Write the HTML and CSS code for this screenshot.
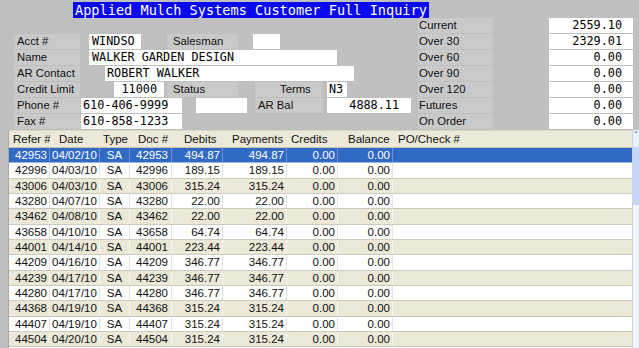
FILE: index.html
```
<!DOCTYPE html>
<html>
<head>
    <title>Customer Full Inquiry</title>
    <link rel="stylesheet" href="styles.css">
</head>
<body>
    <div class="screen">
        <div class="title-row">
            <span class="title">Applied Mulch Systems Customer Full Inquiry</span>
        </div>

        <div class="top">
            <div class="account">
                <div class="field-row">
                    <span class="label">Acct #</span>
                    <span class="value acct">WINDSO</span>
                    <span class="label salesman">Salesman</span>
                    <span class="value salesman-val"></span>
                </div>
                <div class="field-row">
                    <span class="label">Name</span>
                    <span class="value name">WALKER GARDEN DESIGN</span>
                </div>
                <div class="field-row">
                    <span class="label">AR Contact</span>
                    <span class="value contact">ROBERT WALKER</span>
                </div>
                <div class="field-row">
                    <span class="label">Credit Limit</span>
                    <span class="value credit">11000</span>
                    <span class="label status">Status</span>
                    <span class="label terms">Terms</span>
                    <span class="value terms-val">N3</span>
                </div>
                <div class="field-row">
                    <span class="label">Phone #</span>
                    <span class="value phone">610-406-9999</span>
                    <span class="value blank"></span>
                    <span class="label arbal">AR Bal</span>
                    <span class="value arbal-val">4888.11</span>
                </div>
                <div class="field-row">
                    <span class="label">Fax #</span>
                    <span class="value phone">610-858-1233</span>
                </div>
            </div>

            <div class="aging">
                <div class="field-row"><span class="label age">Current</span><span class="value amount">2559.10</span></div>
                <div class="field-row"><span class="label age">Over 30</span><span class="value amount">2329.01</span></div>
                <div class="field-row"><span class="label age">Over 60</span><span class="value amount">0.00</span></div>
                <div class="field-row"><span class="label age">Over 90</span><span class="value amount">0.00</span></div>
                <div class="field-row"><span class="label age">Over 120</span><span class="value amount">0.00</span></div>
                <div class="field-row"><span class="label age">Futures</span><span class="value amount">0.00</span></div>
                <div class="field-row"><span class="label age">On Order</span><span class="value amount">0.00</span></div>
            </div>
        </div>

        <div class="history">
            <div class="grid">
                <div class="row head">
                    <span>Refer #</span><span>Date</span><span>Type</span><span>Doc #</span><span>Debits</span><span>Payments</span><span>Credits</span><span>Balance</span><span>PO/Check #</span>
                </div>
                <div class="row selected">
                    <span>42953</span><span>04/02/10</span><span>SA</span><span>42953</span><span>494.87</span><span>494.87</span><span>0.00</span><span>0.00</span><span></span>
                </div>
                <div class="row">
                    <span>42996</span><span>04/03/10</span><span>SA</span><span>42996</span><span>189.15</span><span>189.15</span><span>0.00</span><span>0.00</span><span></span>
                </div>
                <div class="row alt">
                    <span>43006</span><span>04/03/10</span><span>SA</span><span>43006</span><span>315.24</span><span>315.24</span><span>0.00</span><span>0.00</span><span></span>
                </div>
                <div class="row">
                    <span>43280</span><span>04/07/10</span><span>SA</span><span>43280</span><span>22.00</span><span>22.00</span><span>0.00</span><span>0.00</span><span></span>
                </div>
                <div class="row alt">
                    <span>43462</span><span>04/08/10</span><span>SA</span><span>43462</span><span>22.00</span><span>22.00</span><span>0.00</span><span>0.00</span><span></span>
                </div>
                <div class="row">
                    <span>43658</span><span>04/10/10</span><span>SA</span><span>43658</span><span>64.74</span><span>64.74</span><span>0.00</span><span>0.00</span><span></span>
                </div>
                <div class="row alt">
                    <span>44001</span><span>04/14/10</span><span>SA</span><span>44001</span><span>223.44</span><span>223.44</span><span>0.00</span><span>0.00</span><span></span>
                </div>
                <div class="row">
                    <span>44209</span><span>04/16/10</span><span>SA</span><span>44209</span><span>346.77</span><span>346.77</span><span>0.00</span><span>0.00</span><span></span>
                </div>
                <div class="row alt">
                    <span>44239</span><span>04/17/10</span><span>SA</span><span>44239</span><span>346.77</span><span>346.77</span><span>0.00</span><span>0.00</span><span></span>
                </div>
                <div class="row">
                    <span>44280</span><span>04/17/10</span><span>SA</span><span>44280</span><span>346.77</span><span>346.77</span><span>0.00</span><span>0.00</span><span></span>
                </div>
                <div class="row alt">
                    <span>44368</span><span>04/19/10</span><span>SA</span><span>44368</span><span>315.24</span><span>315.24</span><span>0.00</span><span>0.00</span><span></span>
                </div>
                <div class="row">
                    <span>44407</span><span>04/19/10</span><span>SA</span><span>44407</span><span>315.24</span><span>315.24</span><span>0.00</span><span>0.00</span><span></span>
                </div>
                <div class="row alt">
                    <span>44504</span><span>04/20/10</span><span>SA</span><span>44504</span><span>315.24</span><span>315.24</span><span>0.00</span><span>0.00</span><span></span>
                </div>
            </div>
            <div class="scrollbar">
                <div class="scroll-up">&#710;</div>
                <div class="scroll-thumb"></div>
            </div>
        </div>
    </div>
</body>
</html>
```

FILE: styles.css
```
body {
    margin: 0;
    padding: 0;
    background-color: #bfbfbf;
    font-family: "Liberation Sans", Arial, sans-serif;
    font-size: 11px;
    color: #111;
}

.screen {
    width: 639px;
    height: 348px;
    overflow: hidden;
}

/* title bar */
.title-row {
    height: 18px;
    padding-left: 73px;
}

.title {
    display: inline-block;
    margin-top: 2px;
    height: 16px;
    line-height: 16px;
    padding: 0 2px;
    background-color: #0808f2;
    color: #ffffff;
    font-family: "DejaVu Sans Mono", monospace;
    font-size: 13.6px;
    white-space: nowrap;
}

/* header fields */
.top {
    display: flex;
    height: 112px;
}

.account {
    width: 418px;
    margin-top: 16px;
}

.field-row {
    display: flex;
    height: 15px;
    margin-bottom: 1px;
}

.label {
    width: 63px;
    margin-left: 14px;
    padding-left: 3px;
    line-height: 15px;
    font-size: 11.3px;
    background-color: #c9c9c9;
    white-space: nowrap;
}

.value {
    display: block;
    padding: 0 3px;
    line-height: 15px;
    background-color: #ffffff;
    font-family: "DejaVu Sans Mono", monospace;
    font-size: 11.8px;
    color: #000;
    white-space: nowrap;
    box-sizing: border-box;
}

.acct { margin-left: 9px; width: 52px; }
.salesman { margin-left: 26px; width: 65px; padding-left: 6px; }
.salesman-val { margin-left: 15px; width: 27px; }
.name { margin-left: 9px; width: 248px; }
.contact { margin-left: 25px; width: 249px; padding-left: 2px; }
.credit { margin-left: 34px; width: 50px; text-align: right; padding-right: 7px; }
.status { margin-left: 3px; width: 65px; padding-left: 6px; }
.terms { margin-left: 17px; width: 42px; padding-left: 25px; }
.terms-val { margin-left: 5px; width: 20px; padding: 0 2px; }
.phone { margin-left: 1px; width: 101px; padding-left: 2px; }
.blank { margin-left: 14px; width: 51px; }
.arbal { margin-left: 8px; width: 65px; }
.arbal-val { margin-left: 4px; width: 84px; text-align: right; padding-right: 12px; }

.aging .label.age {
    margin-left: 0;
    width: 74px;
    padding-left: 1px;
}

.amount {
    margin-left: 56px;
    width: 84px;
    text-align: right;
    padding-right: 11px;
}

/* history grid */
.history {
    display: flex;
    margin-left: 8px;
}

.grid {
    width: 624px;
    background-color: #ffffff;
    border-left: 1px solid #a9a9a9;
    box-sizing: border-box;
    font-size: 11.5px;
}

.row {
    display: grid;
    grid-template-columns: 41px 50px 30px 42px 51px 64px 51px 55px 1fr;
    height: 15.33px;
    line-height: 14px;
    border-bottom: 1px solid #cdcbbd;
    box-sizing: border-box;
    background-color: #ffffff;
}

.row span {
    border-right: 1px solid #e4e4de;
    white-space: nowrap;
    overflow: hidden;
}

.row span:nth-child(1) { text-align: right; padding-right: 2px; }
.row span:nth-child(2),
.row span:nth-child(3) { text-align: center; }
.row span:nth-child(4) { text-align: right; padding-right: 3px; }
.row span:nth-child(5),
.row span:nth-child(6),
.row span:nth-child(7),
.row span:nth-child(8) { text-align: right; padding-right: 2px; }
.row span:nth-child(9) { border-right: none; }

.row.alt {
    background-color: #ebe8d8;
}

.row.alt span {
    border-right-color: #f7f6ef;
}

.row.selected {
    background-color: #316ac5;
    color: #ffffff;
    border-bottom-color: #9db4dc;
}

.row.selected span {
    border-right-color: #6a93d6;
}

.row.head {
    height: 18px;
    line-height: 17px;
    background-color: #ece9da;
    border-top: 1px solid #d8d6c8;
    border-bottom: 1px solid #c4c1af;
}

.row.head span {
    text-align: left;
    padding-right: 0;
    border-right: none;
}

.row.head span:nth-child(1) { padding-left: 4px; }
.row.head span:nth-child(2) { padding-left: 9px; }
.row.head span:nth-child(3) { padding-left: 3px; }
.row.head span:nth-child(4) { padding-left: 8px; }
.row.head span:nth-child(5) { padding-left: 12px; }
.row.head span:nth-child(6) { padding-left: 9px; }
.row.head span:nth-child(7) { padding-left: 4px; }
.row.head span:nth-child(8) { padding-left: 10px; }
.row.head span:nth-child(9) { padding-left: 5px; }

.scrollbar {
    width: 7px;
    height: 218px;
    background-color: #f2f5fb;
    border-left: 1px solid #c8d4ea;
    box-sizing: border-box;
}

.scroll-up {
    height: 17px;
    line-height: 14px;
    font-size: 10px;
    text-align: center;
    color: #4d6185;
    background-color: #eaf0fb;
}

.scroll-thumb {
    height: 58px;
    background-color: #c6d6f6;
}
```
